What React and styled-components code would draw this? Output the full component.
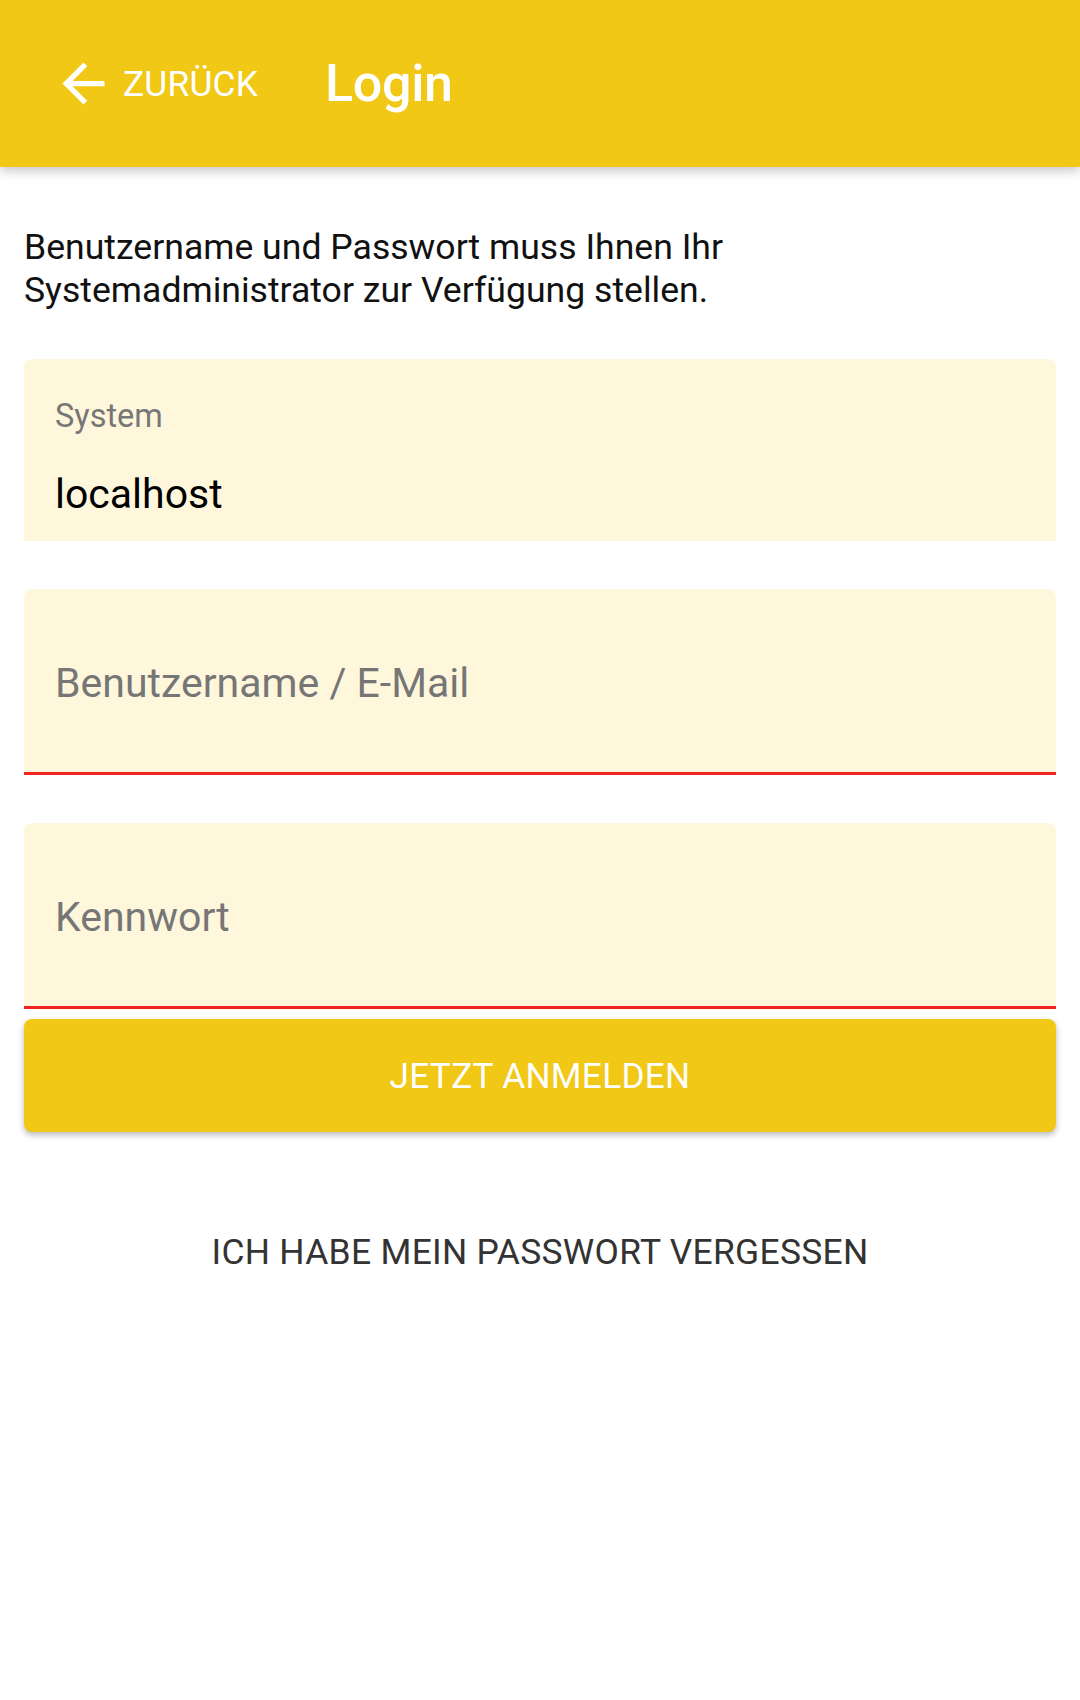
import React from 'react';
import styled, { createGlobalStyle } from 'styled-components';

const GlobalStyle = createGlobalStyle`
  html, body {
    margin: 0;
    padding: 0;
    background: #ffffff;
  }
  body {
    font-family: Roboto, "Noto Sans", "Liberation Sans", sans-serif;
    -webkit-font-smoothing: antialiased;
  }
`;

const Page = styled.div`
  width: 1080px;
  min-height: 1700px;
  background: #ffffff;
`;

const Toolbar = styled.header`
  height: 167px;
  background: #f1c815;
  display: flex;
  align-items: center;
  padding-left: 52px;
  box-shadow: 0 4px 10px rgba(0, 0, 0, 0.22);
  position: relative;
  z-index: 1;
`;

const BackButton = styled.button`
  display: flex;
  align-items: center;
  gap: 8px;
  border: 0;
  background: transparent;
  color: #ffffff;
  font-family: inherit;
  font-size: 35.3px;
  letter-spacing: 0.2px;
  padding: 0;
  cursor: pointer;
  svg {
    width: 63px;
    height: 63px;
    fill: #ffffff;
  }
`;

const Title = styled.h1`
  margin: 0 0 0 67px;
  color: #ffffff;
  font-size: 52px;
  font-weight: 500;
  letter-spacing: -0.3px;
`;

const Content = styled.main`
  padding: 59px 24px 0;
  display: flex;
  flex-direction: column;
`;

const Intro = styled.p`
  margin: 0 0 47px;
  color: #111111;
  font-size: 35.6px;
  line-height: 43px;
`;

const Field = styled.div`
  height: ${p => (p.$filled ? '182px' : '183px')};
  background: #fff7dc;
  border-radius: 8px 8px 0 0;
  border-bottom: ${p => (p.$error ? '3px solid #f0261e' : 'none')};
  display: flex;
  flex-direction: column;
  justify-content: ${p => (p.$filled ? 'flex-start' : 'center')};
  padding: 0 31px;
  margin-bottom: ${p => p.$gap || '48px'};
`;

const Label = styled.span`
  margin-top: 38px;
  color: #777777;
  font-size: 32.5px;
  line-height: 38px;
`;

const Value = styled.span`
  margin-top: 35px;
  color: #000000;
  font-size: 41px;
  line-height: 48px;
`;

const Placeholder = styled.span`
  color: #767676;
  font-size: 41px;
  line-height: 48px;
  margin-top: 4px;
`;

const SubmitButton = styled.button`
  height: 113px;
  border: 0;
  border-radius: 8px;
  background: #f1c815;
  color: #ffffff;
  font-family: inherit;
  font-size: 35.2px;
  letter-spacing: 0.3px;
  box-shadow: 0 3px 6px rgba(0, 0, 0, 0.28);
  cursor: pointer;
`;

const ForgotLink = styled.button`
  margin-top: 98px;
  align-self: center;
  border: 0;
  background: transparent;
  color: #333333;
  font-family: inherit;
  font-size: 35.4px;
  letter-spacing: 0.3px;
  cursor: pointer;
`;

const ArrowBack = () => (
  <svg viewBox="0 0 24 24" aria-hidden="true">
    <path d="M20 11H7.83l5.59-5.59L12 4l-8 8 8 8 1.41-1.41L7.83 13H20v-2z" />
  </svg>
);

export default function App() {
  return (
    <Page>
      <GlobalStyle />
      <Toolbar>
        <BackButton>
          <ArrowBack />
          ZURÜCK
        </BackButton>
        <Title>Login</Title>
      </Toolbar>
      <Content>
        <Intro>
          Benutzername und Passwort muss Ihnen Ihr
          <br />
          Systemadministrator zur Verfügung stellen.
        </Intro>
        <Field $filled>
          <Label>System</Label>
          <Value>localhost</Value>
        </Field>
        <Field $error>
          <Placeholder>Benutzername / E-Mail</Placeholder>
        </Field>
        <Field $error $gap="10px">
          <Placeholder>Kennwort</Placeholder>
        </Field>
        <SubmitButton>JETZT ANMELDEN</SubmitButton>
        <ForgotLink>ICH HABE MEIN PASSWORT VERGESSEN</ForgotLink>
      </Content>
    </Page>
  );
}
